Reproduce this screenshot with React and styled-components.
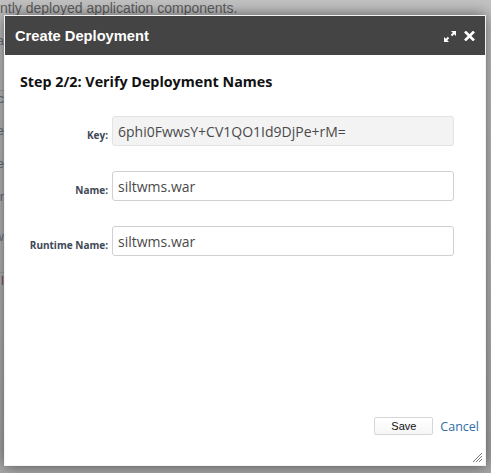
import React from "react";
import styled, { createGlobalStyle } from "styled-components";

const GlobalStyle = createGlobalStyle`
  html, body {
    margin: 0;
    padding: 0;
    background: #bababa;
    overflow: hidden;
  }
  * { box-sizing: border-box; }
`;

const Page = styled.div`
  position: relative;
  width: 491px;
  height: 473px;
  background: linear-gradient(180deg, #c2c2c2 0%, #b8b8b8 60%, #a9a9a9 100%);
  font-family: "Liberation Sans", Arial, sans-serif;
  overflow: hidden;
`;

const Intro = styled.p`
  margin: 0;
  padding: 1px 0 0 0;
  font-size: 14px;
  line-height: 14px;
  color: #5e5e5e;
  white-space: nowrap;
`;

const Strip = styled.div`
  display: flex;
  flex-direction: column;
  width: 4px;
  overflow: hidden;
  padding-top: ${(p) => p.$top}px;
`;

const StripRow = styled.div`
  display: flex;
  justify-content: flex-end;
  height: ${(p) => p.$h}px;
  font-size: 13px;
  color: ${(p) => p.$color || "#6b7382"};
  white-space: nowrap;
  border-bottom: ${(p) => (p.$rule ? "1px solid #a8a8a8" : "none")};
`;

const Dialog = styled.div`
  position: absolute;
  left: 4px;
  top: 15px;
  width: 482px;
  height: 451px;
  display: flex;
  flex-direction: column;
  background: #fff;
  border: 1px solid #f2f2f2;
  box-shadow: 0 0 14px rgba(0, 0, 0, 0.55);
`;

const TitleBar = styled.div`
  display: flex;
  align-items: center;
  justify-content: space-between;
  height: 39px;
  padding: 0 10px 0 10px;
  background: #444444;
  color: #fff;
`;

const Title = styled.h1`
  margin: 0;
  font-family: "Liberation Sans", Arial, sans-serif;
  font-size: 14.7px;
  font-weight: bold;
`;

const TitleTools = styled.div`
  display: flex;
  align-items: center;
  gap: 8px;
  padding-top: 1px;
`;

const Body = styled.div`
  flex: 1;
  display: flex;
  flex-direction: column;
  padding: 17px 6px 0 15px;
  font-family: "Open Sans", sans-serif;
`;

const Heading = styled.h2`
  margin: 0 0 24px 0;
  font-size: 14.3px;
  line-height: 20px;
  font-weight: bold;
  color: #111;
`;

const Form = styled.div`
  display: flex;
  flex-direction: column;
  gap: 25px;
`;

const Row = styled.div`
  display: grid;
  grid-template-columns: 88px 342px;
  column-gap: 4px;
  align-items: center;
`;

const Label = styled.label`
  text-align: right;
  font-size: 10px;
  font-weight: bold;
  color: #3e4856;
  padding-top: 7px;
`;

const Field = styled.div`
  height: 30px;
  display: flex;
  align-items: center;
  padding: 0 5px;
  border: 1px solid ${(p) => (p.$readOnly ? "#e3e3e3" : "#d0d0d0")};
  border-radius: 3px;
  background: ${(p) => (p.$readOnly ? "#f3f3f3" : "#fff")};
  font-size: 14px;
  color: #4a4a4a;
  white-space: nowrap;
`;

const Footer = styled.div`
  display: flex;
  justify-content: flex-end;
  align-items: center;
  gap: 7px;
  padding: 0 0 30px 0;
  margin-top: auto;
`;

const Button = styled.button`
  width: 59px;
  height: 18px;
  padding: 0;
  background: linear-gradient(#ffffff, #f6f6f6);
  border: 1px solid #d6d6d6;
  border-radius: 2px;
  font-family: "Liberation Sans", Arial, sans-serif;
  font-size: 11px;
  color: #111;
`;

const LinkButton = styled.a`
  font-family: "Open Sans", sans-serif;
  font-size: 12.5px;
  color: #2f6ea6;
  text-decoration: none;
`;

const Grip = styled.svg`
  position: absolute;
  right: 2px;
  bottom: 2px;
`;

function ExpandIcon() {
  return (
    <svg width="12" height="11" viewBox="0 0 12 11">
      <path d="M12 0 L12 5 L7 0 Z" fill="#fff" />
      <path d="M11 1 L7.5 4.5" stroke="#fff" strokeWidth="2" />
      <path d="M0 11 L0 6 L5 11 Z" fill="#fff" />
      <path d="M1 10 L4.5 6.5" stroke="#fff" strokeWidth="2" />
    </svg>
  );
}

function CloseIcon() {
  return (
    <svg width="11" height="10" viewBox="0 0 11 10">
      <path d="M1 0.5 L10 9.5 M10 0.5 L1 9.5" stroke="#fff" strokeWidth="2.6" />
    </svg>
  );
}

const fields = [
  { label: "Key:", value: "6phi0FwwsY+CV1QO1Id9DjPe+rM=", readOnly: true },
  { label: "Name:", value: "siltwms.war" },
  { label: "Runtime Name:", value: "siltwms.war" },
];

export default function App() {
  return (
    <>
      <GlobalStyle />
      <Page>
        <Intro>ntly deployed application components.</Intro>
        <Strip $top={18}>
          <StripRow $h={58} $rule>a</StripRow>
          <StripRow $h={32}>ic</StripRow>
          <StripRow $h={33}>e</StripRow>
          <StripRow $h={33}>e</StripRow>
          <StripRow $h={40}>r</StripRow>
          <StripRow $h={44} $rule>w</StripRow>
          <StripRow $h={42} $color="#7a5050">l</StripRow>
        </Strip>

        <Dialog>
          <TitleBar>
            <Title>Create Deployment</Title>
            <TitleTools>
              <ExpandIcon />
              <CloseIcon />
            </TitleTools>
          </TitleBar>
          <Body>
            <Heading>Step 2/2: Verify Deployment Names</Heading>
            <Form>
              {fields.map((f) => (
                <Row key={f.label}>
                  <Label>{f.label}</Label>
                  <Field $readOnly={f.readOnly}>{f.value}</Field>
                </Row>
              ))}
            </Form>
            <Footer>
              <Button>Save</Button>
              <LinkButton href="#">Cancel</LinkButton>
            </Footer>
          </Body>
          <Grip width="11" height="11" viewBox="0 0 11 11">
            <path d="M1 10 L10 1 M4 10 L10 4 M7 10 L10 7" stroke="#777" strokeWidth="1" />
          </Grip>
        </Dialog>
      </Page>
    </>
  );
}
